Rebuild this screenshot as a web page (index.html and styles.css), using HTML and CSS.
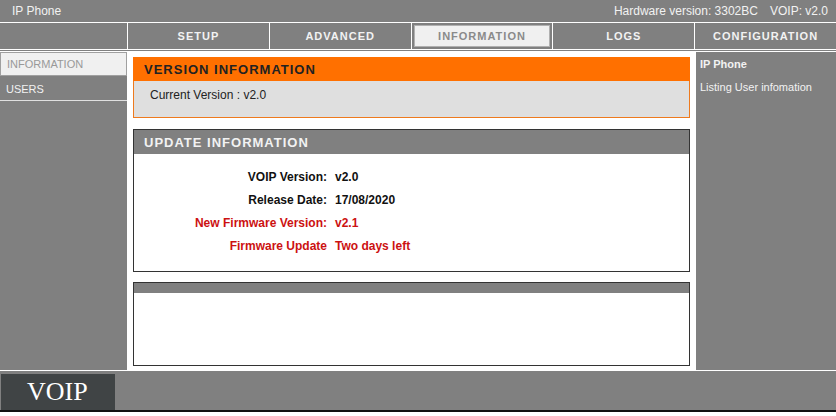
FILE: index.html
```html
<!DOCTYPE html>
<html>
<head>
<meta charset="utf-8">
<link rel="stylesheet" href="styles.css">
</head>
<body>
<div class="page">
  <header class="topbar">
    <span class="brand">IP Phone</span>
    <span class="hw">Hardware version: 3302BC<span class="sp"></span>VOIP: v2.0</span>
  </header>
  <nav class="nav">
    <div class="nav-cell"></div>
    <div class="nav-cell">SETUP</div>
    <div class="nav-cell">ADVANCED</div>
    <div class="nav-cell active"><span>INFORMATION</span></div>
    <div class="nav-cell">LOGS</div>
    <div class="nav-cell">CONFIGURATION</div>
  </nav>
  <div class="middle">
    <aside class="sidebar">
      <div class="side-item active">INFORMATION</div>
      <div class="side-item">USERS</div>
    </aside>
    <main class="main">
      <section class="box version">
        <div class="box-head orange">VERSION INFORMATION</div>
        <div class="box-body grey">Current Version : v2.0</div>
      </section>
      <section class="box update">
        <div class="box-head gray">UPDATE INFORMATION</div>
        <div class="box-body info">
          <div class="lbl">VOIP Version:</div><div class="val">v2.0</div>
          <div class="lbl">Release Date:</div><div class="val">17/08/2020</div>
          <div class="lbl red">New Firmware Version:</div><div class="val red">v2.1</div>
          <div class="lbl red">Firmware Update</div><div class="val red">Two days left</div>
        </div>
      </section>
      <section class="box empty">
        <div class="box-head gray thin"></div>
        <div class="box-body blank"></div>
      </section>
    </main>
    <aside class="help">
      <div class="help-title">IP Phone</div>
      <div class="help-text">Listing User infomation</div>
    </aside>
  </div>
  <footer class="footer">
    <div class="logo">VOIP</div>
  </footer>
</div>
</body>
</html>
```
FILE: styles.css
```css
* { box-sizing: border-box; }
html, body { margin: 0; padding: 0; background: #fff; }
body { font-family: "Liberation Sans", Arial, sans-serif; }
.page { width: 836px; height: 416px; display: flex; flex-direction: column; background: #fff; }

.topbar {
  height: 22px; background: #808080; color: #f2f2f2; font-size: 12px;
  display: flex; justify-content: space-between; align-items: center;
  padding: 0 8px 0 12px; flex: none;
}
.hw .sp { display: inline-block; width: 12px; }

.nav {
  margin-top: 1px; height: 26px; flex: none;
  display: grid; grid-template-columns: 127px repeat(5, 1fr); column-gap: 1px;
  background: #fff;
}
.nav-cell {
  background: #808080; color: #f2f2f2; font-size: 11px; font-weight: bold;
  letter-spacing: 1px; display: flex; align-items: center; justify-content: center;
}
.nav-cell.active { padding: 2px; }
.nav-cell.active span {
  flex: 1; height: 100%; background: #f0f0f0; color: #8a8a8a;
  display: flex; align-items: center; justify-content: center;
  border: 1px solid #b0b0b0;
}

.middle {
  margin-top: 1px; border-top: 1px solid #808080; padding-top: 1px;
  height: 320px; flex: none;
  display: grid; grid-template-columns: 127px 568px 1fr;
}
.sidebar { background: #808080; display: flex; flex-direction: column; }
.side-item {
  height: 24px; color: #f2f2f2; font-size: 11px; padding-left: 6px;
  display: flex; align-items: center; border-bottom: 1px solid #e0e0e0;
}
.side-item.active { background: #f0f0f0; color: #999; border: 1px solid #a0a0a0; margin: 0 0 1px 0; }

.main { background: #fff; padding: 5px 5px 4px 6px; display: flex; flex-direction: column; gap: 11px; }
.box { display: flex; flex-direction: column; }
.box-head {
  height: 24px; font-size: 13px; font-weight: bold; letter-spacing: 1px;
  display: flex; align-items: center; padding-left: 11px;
}
.orange { background: #ff7000; color: #222; }
.gray { background: #808080; color: #f2f2f2; }
.thin { height: 10px; }
.version .box-body { border: 1px solid #ee7a1e; border-top: none; }
.grey { background: #dfdfdf; height: 37px; font-size: 12px; color: #222; padding: 7px 0 0 16px; }
.update, .empty { border: 1px solid #333; }
.update .box-head { padding-left: 10px; }
.info {
  display: grid; grid-template-columns: 193px 1fr; column-gap: 8px; row-gap: 9px;
  padding: 16px 0 18px 0; font-size: 12px; font-weight: bold; color: #111;
}
.info > div { line-height: 14px; }
.lbl { text-align: right; }
.red { color: #cc1111; }
.update { margin-bottom: -1px; }
.empty { flex: 1; }
.blank { flex: 1; background: #fff; }

.help { background: #808080; padding: 6px 4px; color: #f2f2f2; font-size: 11px; border-left: 1px solid #fff; }
.help-title { font-weight: bold; }
.help-text { margin-top: 11px; }

.footer {
  margin-top: 1px; flex: none; height: 41px; background: #808080;
  border-bottom: 2px solid #111; padding: 3px 0 0 1px;
}
.logo {
  width: 114px; height: 36px; background: #404445; color: #fff;
  font-family: "Liberation Serif", "Times New Roman", serif; font-size: 26px;
  display: flex; align-items: center; padding-left: 26px;
}
```
